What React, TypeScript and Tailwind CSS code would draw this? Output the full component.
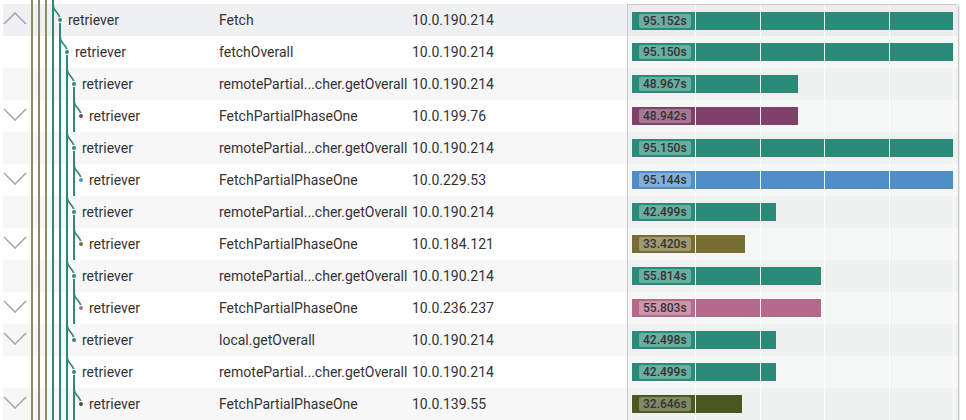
import React from 'react';

// Trace waterfall — span rows with tree guides on the left and a duration timeline on the right.

type Row = { d: 0 | 1 | 2 | 3; op: string; ip: string; dur: number; color: string; chev?: 'up' | 'down' };

const TEAL = '#2c8a78';
const REMOTE = 'remotePartial...cher.getOverall';
const PHASE = 'FetchPartialPhaseOne';

const ROWS: Row[] = [
  { d: 0, op: 'Fetch', ip: '10.0.190.214', dur: 95.152, color: TEAL, chev: 'up' },
  { d: 1, op: 'fetchOverall', ip: '10.0.190.214', dur: 95.15, color: TEAL },
  { d: 2, op: REMOTE, ip: '10.0.190.214', dur: 48.967, color: TEAL },
  { d: 3, op: PHASE, ip: '10.0.199.76', dur: 48.942, color: '#7f4069', chev: 'down' },
  { d: 2, op: REMOTE, ip: '10.0.190.214', dur: 95.15, color: TEAL },
  { d: 3, op: PHASE, ip: '10.0.229.53', dur: 95.144, color: '#508ec8', chev: 'down' },
  { d: 2, op: REMOTE, ip: '10.0.190.214', dur: 42.499, color: TEAL },
  { d: 3, op: PHASE, ip: '10.0.184.121', dur: 33.42, color: '#776e34', chev: 'down' },
  { d: 2, op: REMOTE, ip: '10.0.190.214', dur: 55.814, color: TEAL },
  { d: 3, op: PHASE, ip: '10.0.236.237', dur: 55.803, color: '#b56a8b', chev: 'down' },
  { d: 2, op: 'local.getOverall', ip: '10.0.190.214', dur: 42.498, color: TEAL, chev: 'down' },
  { d: 2, op: REMOTE, ip: '10.0.190.214', dur: 42.499, color: TEAL },
  { d: 3, op: PHASE, ip: '10.0.139.55', dur: 32.646, color: '#4b5621', chev: 'down' },
];

const MAX = 95.152;
const TRACK = 322;
const INDENT = ['pl-[39px]', 'pl-[46px]', 'pl-[53px]', 'pl-[60px]'];

function leftBg(i: number) {
  if (i === 0) return 'bg-[#eff0f2]';
  return i % 2 ? 'bg-white' : 'bg-[#f7f7f8]';
}

function panelBg(i: number) {
  if (i === 0) return 'bg-[#ebeced]';
  return i % 2 ? 'bg-[#f5f7f6]' : 'bg-[#eef1f0]';
}

export default function App() {
  return (
    <div className="relative h-[420px] w-[966px] overflow-hidden bg-white pt-1 font-['Roboto',sans-serif] text-[14px] text-[#333]">
      <div className="flex">
        <div className="ml-[3px] flex w-[624px] flex-col">
          {ROWS.map((r, i) => (
            <div key={i} className={`flex h-8 items-center ${leftBg(i)}`}>
              <div className="h-8 w-[26px] shrink-0">
                {r.chev && <Chevron dir={r.chev} />}
              </div>
              <div className={`w-[190px] shrink-0 whitespace-nowrap ${INDENT[r.d]}`}>retriever</div>
              <div className="w-[193px] shrink-0 whitespace-nowrap">{r.op}</div>
              <div className="whitespace-nowrap">{r.ip}</div>
            </div>
          ))}
        </div>

        <div className="relative w-[332px] rounded-tr-[4px] border-x border-t border-[#c9c9c9]">
          {ROWS.map((r, i) => (
            <div
              key={i}
              className={`flex items-center pl-1 ${i === 0 ? 'h-[31px]' : 'h-8'} ${panelBg(i)}`}
            >
              <div
                className="flex h-[18px] items-center pl-[7px]"
                style={{ width: (r.dur / MAX) * TRACK, background: r.color }}
              >
                <span className="rounded-[2px] bg-white/30 px-1 text-[12px] leading-[14px] font-medium text-[#333]">
                  {r.dur.toFixed(3)}s
                </span>
              </div>
            </div>
          ))}
          <div className="pointer-events-none absolute top-0 bottom-0 left-[4px] grid w-[322px] grid-cols-5">
            <div className="border-r border-white/90" />
            <div className="border-r border-white/90" />
            <div className="border-r border-white/90" />
            <div className="border-r border-white/90" />
            <div className="border-r border-white/90" />
          </div>
        </div>

        <div className="w-[7px] shrink-0 border-l border-[#ececec] bg-white" />
      </div>

      <TreeGuides />
    </div>
  );
}

function Chevron({ dir }: { dir: 'up' | 'down' }) {
  return (
    <svg width="24" height="13" viewBox="0 0 24 13" className="mt-2" fill="none">
      <polyline
        points={dir === 'up' ? '1,12 12,1 23,12' : '1,1 12,12 23,1'}
        stroke="#a8a8a8"
        strokeWidth="1.6"
      />
    </svg>
  );
}

function TreeGuides() {
  const H = 420;
  const top = (i: number) => 4 + i * 32;
  const segments: { x: number; y1: number; y2: number }[] = [];
  ROWS.forEach((r, i) => {
    const next = ROWS[i + 1];
    if (r.d === 2 && next && next.d === 3) {
      segments.push({ x: 74, y1: top(i) + 16, y2: top(i + 1) + 32 });
    }
  });

  return (
    <svg className="pointer-events-none absolute top-0 left-0" width="100" height={H}>
      {[32, 39, 46].map((x) => (
        <line key={x} x1={x} y1={0} x2={x} y2={H} stroke="#8d8c62" strokeWidth="2" />
      ))}
      <line x1={53} y1={0} x2={53} y2={H} stroke={TEAL} strokeWidth="2" />
      <line x1={60} y1={20} x2={60} y2={H} stroke={TEAL} strokeWidth="2" />
      <line x1={67} y1={52} x2={67} y2={H} stroke={TEAL} strokeWidth="2" />
      {segments.map((s, i) => (
        <line key={i} x1={s.x} y1={s.y1} x2={s.x} y2={s.y2} stroke={TEAL} strokeWidth="2" />
      ))}
      {ROWS.map((r, i) => {
        const dx = 60 + r.d * 7;
        const px = dx - 7;
        const t = top(i);
        const m = t + 16;
        return (
          <path
            key={i}
            d={`M${px} ${t} C${px} ${t + 9} ${dx} ${m - 9} ${dx} ${m}`}
            stroke={TEAL}
            strokeWidth="1.6"
            fill="none"
          />
        );
      })}
      {ROWS.map((r, i) => {
        const dx = 60 + r.d * 7;
        const m = top(i) + 16;
        return (
          <g key={i}>
            <circle cx={dx} cy={m} r="3" fill="white" />
            <circle cx={dx} cy={m} r="2" fill={r.color} />
          </g>
        );
      })}
    </svg>
  );
}
